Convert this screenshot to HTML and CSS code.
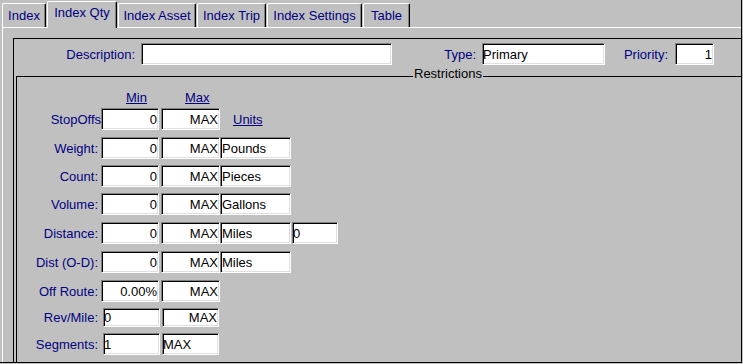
FILE: index.html
```html
<!DOCTYPE html>
<html>
<head>
<meta charset="utf-8">
<title>Index Qty</title>
<link rel="stylesheet" href="styles.css">
</head>
<body>
<div class="window">
  <div class="tabs">
    <div class="tab tab-index">Index</div>
    <div class="tab tab-active tab-qty">Index Qty</div>
    <div class="tab tab-asset">Index Asset</div>
    <div class="tab tab-trip">Index Trip</div>
    <div class="tab tab-settings">Index Settings</div>
    <div class="tab tab-table">Table</div>
  </div>
  <div class="panel">
    <div class="frame">
      <div class="toprow">
        <label class="lbl lbl-desc">Description:</label>
        <input class="fld fld-desc" value="">
        <label class="lbl lbl-type">Type:</label>
        <input class="fld fld-type" value="Primary">
        <label class="lbl lbl-prio">Priority:</label>
        <input class="fld fld-prio num" value="1">
      </div>
      <div class="restr">
        <span class="legend">Restrictions</span>
        <div class="grid">
          <a class="hdr c-min hdr-min">Min</a>
          <a class="hdr c-max hdr-max">Max</a>

          <label class="rl c-lbl rl-tight">StopOffs</label>
          <input class="fld c-min w-min num" value="0">
          <input class="fld c-max w-max num" value="MAX">
          <a class="units c-unit">Units</a>

          <label class="rl c-lbl">Weight:</label>
          <input class="fld c-min w-min num" value="0">
          <input class="fld c-max w-max num" value="MAX">
          <input class="fld c-unit w-unit" value="Pounds">

          <label class="rl c-lbl">Count:</label>
          <input class="fld c-min w-min num" value="0">
          <input class="fld c-max w-max num" value="MAX">
          <input class="fld c-unit w-unit" value="Pieces">

          <label class="rl c-lbl">Volume:</label>
          <input class="fld c-min w-min num" value="0">
          <input class="fld c-max w-max num" value="MAX">
          <input class="fld c-unit w-unit" value="Gallons">

          <label class="rl c-lbl">Distance:</label>
          <input class="fld c-min w-min num" value="0">
          <input class="fld c-max w-max num" value="MAX">
          <input class="fld c-unit w-unit" value="Miles">
          <input class="fld c-ext w-ext tight" value="0">

          <label class="rl c-lbl">Dist (O-D):</label>
          <input class="fld c-min w-min num" value="0">
          <input class="fld c-max w-max num" value="MAX">
          <input class="fld c-unit w-unit" value="Miles">

          <label class="rl c-lbl">Off Route:</label>
          <input class="fld c-min w-min num" value="0.00%">
          <input class="fld c-max w-max num" value="MAX">

          <label class="rl c-lbl rl-short">Rev/Mile:</label>
          <input class="fld c-min w-min2 short tight" value="0">
          <input class="fld c-max w-max2 short num" value="MAX">

          <label class="rl c-lbl">Segments:</label>
          <input class="fld c-min w-min2 tight" value="1">
          <input class="fld c-max w-max2 tight" value="MAX">
        </div>
      </div>
    </div>
  </div>
</div>
</body>
</html>
```

FILE: styles.css
```css
html, body {
  margin: 0;
  padding: 0;
  background: #c0c0c0;
}

body {
  font-family: "Liberation Sans", Arial, sans-serif;
  font-size: 13px;
  line-height: 15px;
  color: #000080;
}

.window {
  width: 742px;
  height: 363px;
  box-sizing: border-box;
  border-right: 1px solid #000;
  border-bottom: 1px solid #000;
  overflow: hidden;
  background: #c0c0c0;
}

/* ---------- tabs ---------- */
.tabs {
  display: flex;
  align-items: flex-end;
  gap: 1px;
  height: 27px;
  padding-left: 2px;
  box-sizing: border-box;
}

.tab {
  box-sizing: border-box;
  height: 24px;
  padding-top: 4px;
  text-align: center;
  white-space: nowrap;
  border-top: 1px solid #fff;
  border-left: 1px solid #fff;
  border-right: 1px solid #000;
  border-top-left-radius: 2px;
  border-top-right-radius: 2px;
  box-shadow: inset -1px 0 0 #808080;
  background: #c0c0c0;
}

.tab-active {
  height: 27px;
  margin-bottom: -1px;
  padding-top: 3px;
  position: relative;
  z-index: 2;
}

.tab-index { width: 44px; }
.tab-qty { width: 70px; }
.tab-asset { width: 78px; }
.tab-trip { width: 69px; }
.tab-settings { width: 95px; }
.tab-table { width: 47px; }

/* ---------- panel ---------- */
.panel {
  position: relative;
  z-index: 1;
  margin-left: 2px;
  height: 400px;
  border-top: 1px solid #fff;
  border-left: 1px solid #fff;
  padding: 10px 0 0 10px;
}

.frame {
  border-top: 1px solid #000;
  border-left: 1px solid #000;
  height: 400px;
}

.toprow {
  display: flex;
  align-items: center;
  padding-top: 4px;
}

.lbl {
  text-align: right;
  white-space: nowrap;
}

.lbl-desc { width: 121px; margin-right: 6px; }
.lbl-type { width: 84px; margin-right: 6px; }
.lbl-prio { width: 63px; margin-right: 7px; }

.fld {
  box-sizing: border-box;
  height: 22px;
  margin: 0;
  padding: 0 1px;
  font-family: "Liberation Sans", Arial, sans-serif;
  font-size: 13px;
  color: #000;
  background: #fff;
  border: 1px solid;
  border-color: #808080 #fff #fff #808080;
  box-shadow: inset 1px 1px 0 #000, inset -1px -1px 0 #dfdfdf;
  outline: none;
}

.fld-desc { width: 251px; }
.fld-type { width: 123px; padding-left: 0; }
.fld-prio { width: 39px; }

.num { text-align: right; padding-right: 1px; }
.tight { padding-left: 0; }

/* ---------- restrictions ---------- */
.restr {
  position: relative;
  margin: 11px 0 0 2px;
  border-top: 1px solid #000;
  border-left: 1px solid #000;
  height: 400px;
}

.legend {
  position: absolute;
  left: 396px;
  top: -11px;
  padding: 0 1px;
  background: #c0c0c0;
  color: #000;
}

.grid {
  display: grid;
  grid-template-columns: 84px 60px 59px 72px 46px;
  grid-template-rows: 31px 29px 28px 28px 29px 29px 29px 28px 25px 22px;
  align-items: start;
}

.c-lbl { grid-column: 1; }
.c-min { grid-column: 2; }
.c-max { grid-column: 3; }
.c-unit { grid-column: 4; }
.c-ext { grid-column: 5; }

.hdr {
  align-self: end;
  margin-bottom: 3px;
  color: #000080;
  text-decoration: underline;
}

.hdr-min { padding-left: 25px; }
.hdr-max { padding-left: 24px; }

.rl {
  height: 22px;
  display: flex;
  align-items: center;
  justify-content: flex-end;
  padding-right: 3px;
  white-space: nowrap;
}

.rl-tight { padding-right: 0; }
.rl-short { height: 19px; }

.units {
  height: 22px;
  display: flex;
  align-items: center;
  padding-left: 13px;
  color: #000080;
  text-decoration: underline;
}

.w-min { width: 58px; }
.w-max { width: 59px; }
.w-unit { width: 71px; }
.w-ext { width: 46px; }
.w-min2 { width: 57px; margin-left: 2px; }
.w-max2 { width: 57px; margin-left: 1px; }

.short { height: 19px; }
```
